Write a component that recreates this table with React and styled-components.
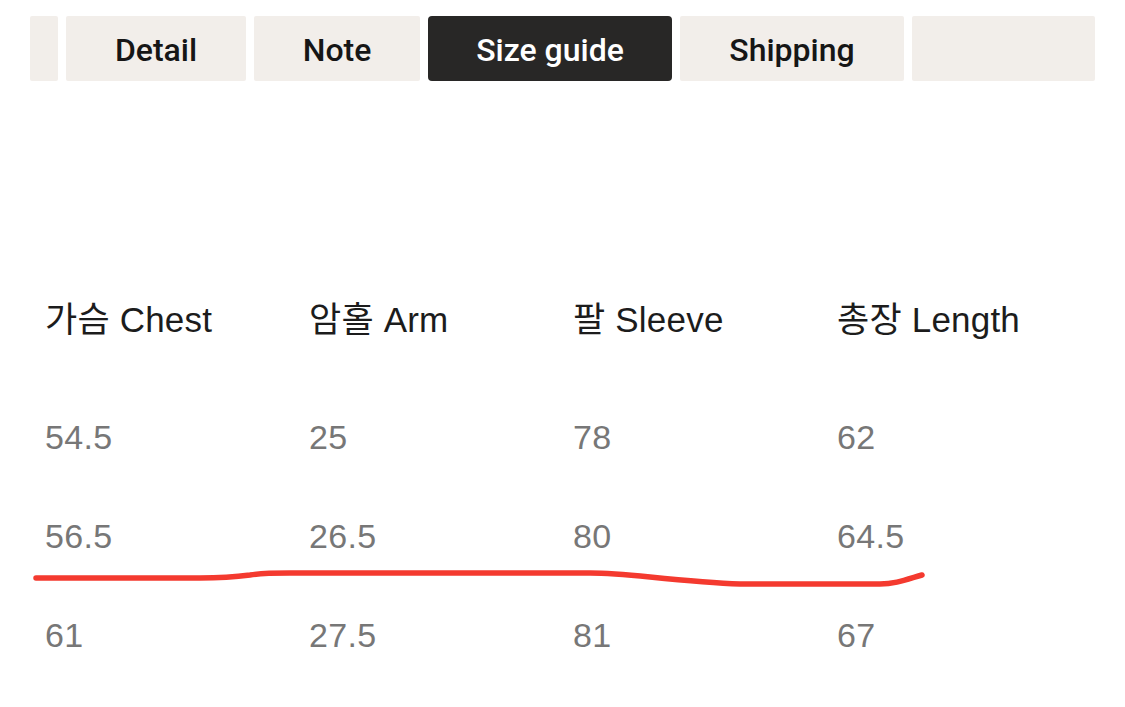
import React from "react";
import styled, { createGlobalStyle } from "styled-components";

const tabs = [
  { label: "", width: 28 },
  { label: "Detail", width: 180 },
  { label: "Note", width: 166 },
  { label: "Size guide", width: 244, active: true },
  { label: "Shipping", width: 224 },
  { label: "", width: 183 },
];

const headers = ["가슴 Chest", "암홀 Arm", "팔 Sleeve", "총장 Length"];

const rows = [
  ["54.5", "25", "78", "62"],
  ["56.5", "26.5", "80", "64.5"],
  ["61", "27.5", "81", "67"],
];

const App = () => {
  return (
    <Page>
      <GlobalStyle />
      <TabBar>
        {tabs.map((t, i) => (
          <Tab key={i} $width={t.width} $active={t.active}>
            {t.label}
          </Tab>
        ))}
      </TabBar>

      <SizeTable>
        <HeaderRow>
          {headers.map((h) => (
            <HeaderCell key={h}>{h}</HeaderCell>
          ))}
        </HeaderRow>
        {rows.map((r, i) => (
          <ValueRow key={i}>
            {r.map((v, j) => (
              <ValueCell key={j}>{v}</ValueCell>
            ))}
          </ValueRow>
        ))}
      </SizeTable>

      <Scribble width="900" height="30" viewBox="0 0 900 30">
        <path
          d="M6 13 L170 13 C190 13 205 12 220 10 C232 8 245 8 260 8 L560 8 C580 8 600 10 620 12 C650 15 680 18 710 19 L850 19 C865 19 875 15 892 10"
          fill="none"
          stroke="#f43a2f"
          strokeWidth="5.5"
          strokeLinecap="round"
          strokeLinejoin="round"
        />
      </Scribble>
    </Page>
  );
};

export default App;

const GlobalStyle = createGlobalStyle`
  html, body {
    margin: 0;
    padding: 0;
    background: #ffffff;
  }
`;

const Page = styled.div`
  position: relative;
  width: 1125px;
  height: 707px;
  overflow: hidden;
  background: #ffffff;
  font-family: "Liberation Sans", "Noto Sans CJK KR", Arial, sans-serif;
`;

const TabBar = styled.div`
  display: flex;
  gap: 8px;
  padding: 16px 0 0 30px;
`;

const Tab = styled.div`
  flex: 0 0 ${(p) => p.$width}px;
  height: 65px;
  display: flex;
  align-items: center;
  justify-content: center;
  padding-top: 2px;
  box-sizing: border-box;
  border-radius: ${(p) => (p.$active ? "4px" : "2px")};
  background: ${(p) => (p.$active ? "#282726" : "#f2eeea")};
  color: ${(p) => (p.$active ? "#ffffff" : "#161616")};
  font-family: "Roboto", "Liberation Sans", sans-serif;
  font-weight: 500;
  font-size: 32px;
`;

const SizeTable = styled.div`
  display: flex;
  flex-direction: column;
  padding-left: 45px;
  margin-top: 210px;
`;

const HeaderRow = styled.div`
  display: grid;
  grid-template-columns: repeat(4, 264px);
  height: 40px;
  align-items: center;
  margin-bottom: 27px;
`;

const HeaderCell = styled.div`
  font-size: 35px;
  color: #1c1c1c;
  letter-spacing: 0.2px;
  white-space: nowrap;
`;

const ValueRow = styled.div`
  display: grid;
  grid-template-columns: repeat(4, 264px);
  height: 40px;
  align-items: center;
  margin-top: 59px;
`;

const ValueCell = styled.div`
  font-size: 34px;
  color: #777777;
  letter-spacing: 0.3px;
`;

const Scribble = styled.svg`
  position: absolute;
  left: 30px;
  top: 565px;
`;
